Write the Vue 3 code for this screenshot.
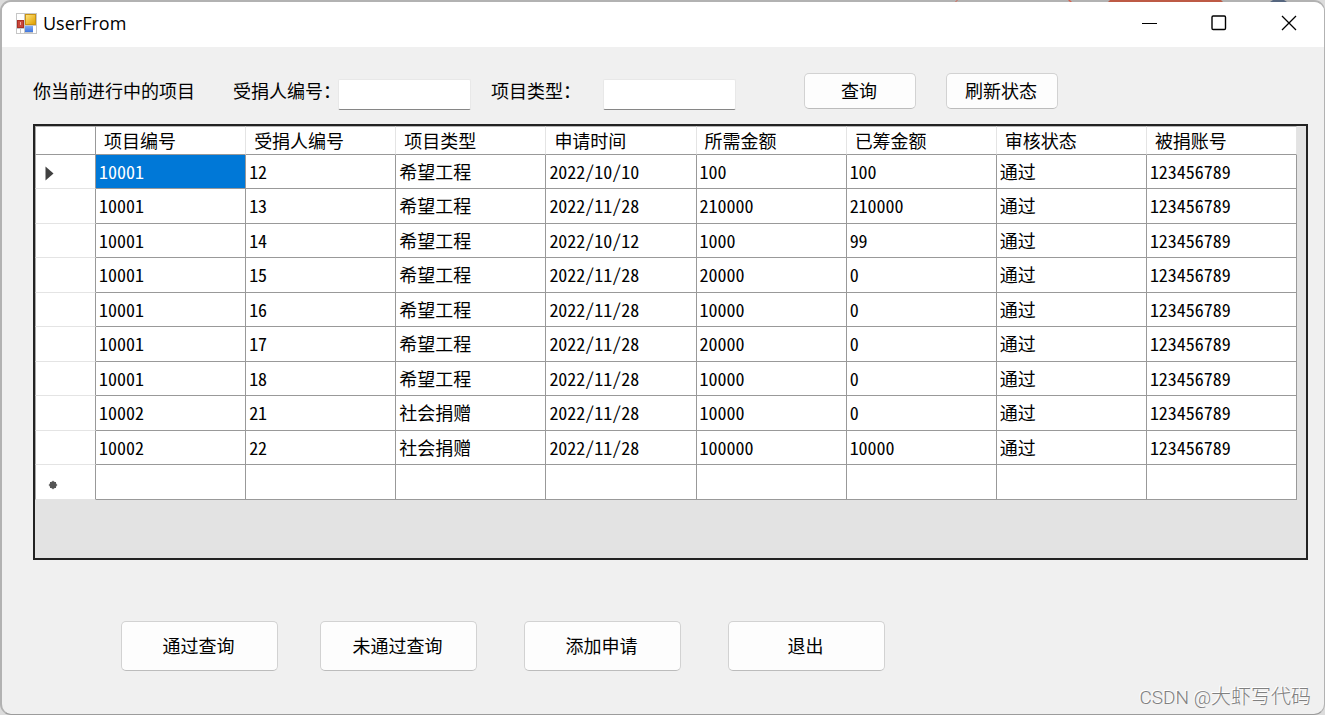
<script setup>
import { ref } from 'vue'

const recipientId = ref('')
const projectType = ref('')

const columns = ['项目编号', '受捐人编号', '项目类型', '申请时间', '所需金额', '已筹金额', '审核状态', '被捐账号']

const rows = [
  ['10001', '12', '希望工程', '2022/10/10', '100', '100', '通过', '123456789'],
  ['10001', '13', '希望工程', '2022/11/28', '210000', '210000', '通过', '123456789'],
  ['10001', '14', '希望工程', '2022/10/12', '1000', '99', '通过', '123456789'],
  ['10001', '15', '希望工程', '2022/11/28', '20000', '0', '通过', '123456789'],
  ['10001', '16', '希望工程', '2022/11/28', '10000', '0', '通过', '123456789'],
  ['10001', '17', '希望工程', '2022/11/28', '20000', '0', '通过', '123456789'],
  ['10001', '18', '希望工程', '2022/11/28', '10000', '0', '通过', '123456789'],
  ['10002', '21', '社会捐赠', '2022/11/28', '10000', '0', '通过', '123456789'],
  ['10002', '22', '社会捐赠', '2022/11/28', '100000', '10000', '通过', '123456789'],
]
</script>

<template>
  <div class="window">
    <header class="titlebar">
      <svg class="app-icon" viewBox="0 0 21 21" aria-hidden="true">
        <defs>
          <linearGradient id="gold" x1="0" y1="0" x2="1" y2="1">
            <stop offset="0" stop-color="#ffe27a" />
            <stop offset="1" stop-color="#e0a100" />
          </linearGradient>
          <linearGradient id="blue" x1="0" y1="0" x2="0" y2="1">
            <stop offset="0" stop-color="#82adf5" />
            <stop offset="1" stop-color="#3f74dc" />
          </linearGradient>
        </defs>
        <rect x="0" y="0" width="21" height="21" fill="#c6c6c6" />
        <rect x="1" y="1" width="7" height="6" fill="#fff" />
        <rect x="1" y="16" width="3" height="4" fill="#fff" />
        <rect x="5" y="16" width="3" height="4" fill="#fff" />
        <rect x="17" y="13" width="3" height="7" fill="#fff" />
        <rect x="9" y="1" width="11" height="11" fill="#c99314" />
        <rect x="10" y="2" width="9" height="9" fill="url(#gold)" />
        <rect x="1" y="7" width="7" height="8" fill="#a92f25" />
        <rect x="2" y="8" width="5" height="6" fill="#c8463a" />
        <rect x="4" y="9" width="1" height="3" fill="#f0b0a8" />
        <rect x="9" y="13" width="8" height="6" fill="url(#blue)" />
      </svg>
      <h1>UserFrom</h1>
      <div class="controls">
        <button type="button" aria-label="最小化">
          <svg viewBox="0 0 16 16"><path d="M1 8.5H16" /></svg>
        </button>
        <button type="button" aria-label="最大化">
          <svg viewBox="0 0 16 16"><rect class="thick" x="1" y="1" width="13.5" height="13.5" rx="1.2" /></svg>
        </button>
        <button type="button" aria-label="关闭">
          <svg viewBox="0 0 16 16"><path class="cross" d="M1 1L15 15M15 1L1 15" /></svg>
        </button>
      </div>
    </header>

    <main>
      <form class="toolbar" @submit.prevent>
        <span class="caption">你当前进行中的项目</span>
        <label class="recipient" for="recipient">受捐人编号：</label>
        <input id="recipient" v-model="recipientId" type="text" />
        <label class="type" for="type">项目类型：</label>
        <input id="type" v-model="projectType" type="text" />
        <button class="btn query" type="submit">查询</button>
        <button class="btn refresh" type="button">刷新状态</button>
      </form>

      <div class="grid">
        <table>
          <colgroup>
            <col class="marker-col" />
            <col v-for="c in columns" :key="c" />
          </colgroup>
          <thead>
            <tr>
              <td class="corner"></td>
              <th v-for="c in columns" :key="c" scope="col">{{ c }}</th>
            </tr>
          </thead>
          <tbody>
            <tr v-for="(row, r) in rows" :key="r">
              <td class="marker">
                <svg v-if="r === 0" viewBox="0 0 9 15" class="arrow"><path d="M0.500 0.500L8.500 7.500L0.500 14.500Z" /></svg>
              </td>
              <td v-for="(cell, c) in row" :key="c" :class="{ selected: r === 0 && c === 0 }">{{ cell }}</td>
            </tr>
            <tr>
              <td class="marker">
                <svg viewBox="0 0 10 10" class="star">
                  <circle cx="5" cy="5" r="3.2" />
                  <path d="M5 0.800V9.200M0.800 5H9.200M2 2L8 8M8 2L2 8" />
                </svg>
              </td>
              <td v-for="c in columns" :key="c"></td>
            </tr>
          </tbody>
        </table>
      </div>

      <div class="actions">
        <button class="btn" type="button">通过查询</button>
        <button class="btn" type="button">未通过查询</button>
        <button class="btn" type="button">添加申请</button>
        <button class="btn" type="button">退出</button>
      </div>
    </main>

    <div class="watermark"><span>CSDN @</span>大虾写代码</div>
  </div>
  <svg class="backdrop" viewBox="0 0 425 2" aria-hidden="true">
    <path d="M55 2L57 0H58L56 2ZM168 0H170L172 2H170Z" fill="#d8604c" />
    <path d="M210 0H321L323 2H208Z" fill="#bd5a45" />
    <path d="M373 0H384L387 2H370Z" fill="#56667f" />
  </svg>
</template>

<style>
body {
  margin: 0;
  background: #dcdcdc;
}
</style>

<style scoped>
.window {
  position: relative;
  box-sizing: border-box;
  min-height: 100vh;
  display: flex;
  flex-direction: column;
  border: 2px solid #b2b2b2;
  border-right-width: 1px;
  border-bottom: 1px solid #9c9c9c;
  border-radius: 11px;
  overflow: hidden;
  background: #f0f0f0;
  color: #000;
  font-family: "Noto Sans CJK SC", sans-serif;
  font-size: 18px;
  line-height: 24px;
  font-feature-settings: "hwid";
}

.backdrop {
  position: absolute;
  top: 0;
  right: 0;
  width: 425px;
  height: 2px;
}

.titlebar {
  box-sizing: border-box;
  display: flex;
  align-items: center;
  height: 45px;
  padding-left: 14px;
  padding-bottom: 3px;
  background: #fff;
}

.app-icon {
  width: 21px;
  height: 21px;
}

h1 {
  margin: 0 0 0 6px;
  font: 400 18px/24px "Open Sans", "Noto Sans", sans-serif;
  font-feature-settings: normal;
}

.controls {
  display: flex;
  margin-left: auto;
}

.controls button {
  width: 70px;
  height: 42px;
  padding: 0;
  border: 0;
  background: none;
  display: grid;
  place-items: center;
}

.controls svg {
  width: 16px;
  height: 16px;
  fill: none;
  stroke: #000;
  stroke-width: 1;
}

.controls .thick {
  stroke-width: 1.4;
}

.controls .cross {
  stroke-width: 1.3;
}

main {
  padding: 26px 16px 43px 31px;
}

.toolbar {
  display: flex;
  align-items: center;
  height: 36px;
  margin-bottom: 15px;
  white-space: nowrap;
}

.caption,
.toolbar label {
  padding-bottom: 2px;
}

.recipient {
  width: 105px;
  margin-left: 38px;
}

.type {
  width: 90px;
  margin-left: 20px;
  margin-right: 22px;
}

input {
  box-sizing: border-box;
  width: 133px;
  height: 31px;
  margin-top: 7px;
  padding: 2px 4px;
  border: 1px solid #e8e8e8;
  border-bottom: 1px solid #868686;
  border-radius: 2px;
  background: #fff;
  font: inherit;
  outline: none;
}

.btn {
  box-sizing: border-box;
  padding: 0 2px 2px 0;
  border: 1px solid #d2d2d2;
  border-bottom-color: #bcbcbc;
  border-radius: 5px;
  background: #fdfdfd;
  color: #000;
  font: inherit;
  font-feature-settings: inherit;
}

.toolbar .btn {
  width: 112px;
  height: 36px;
}

.query {
  margin-left: 68px;
}

.refresh {
  margin-left: 30px;
}

.grid {
  padding-bottom: 58px;
  border: 2px solid #222;
  background: #e3e3e3;
}

table {
  width: calc(100% - 9px);
  table-layout: fixed;
  border-collapse: separate;
  border-spacing: 0;
}

.marker-col {
  width: 61px;
}

th,
td {
  box-sizing: border-box;
  height: 35px;
  padding: 0 0 2px 3px;
  border-right: 1px solid #999;
  border-bottom: 1px solid #999;
  background: #fff;
  text-align: left;
  font-weight: 400;
  line-height: 24px;
  white-space: nowrap;
}

tbody tr:nth-child(odd) td {
  height: 34px;
}

thead th,
thead .corner {
  height: 29px;
  border-top: 1px solid #b5b5b5;
}

thead th {
  padding-left: 8px;
  border-right-color: #e4e4e4;
}

.corner,
.marker {
  border-left: 1px solid #a8a8a8;
}

td.marker {
  padding-left: 9px;
  border-bottom-color: #e4e4e4;
}

td.selected {
  background: #0078d7;
  color: #fff;
}

.marker svg {
  display: block;
}

.arrow {
  width: 9px;
  height: 15px;
  margin-top: 5px;
  fill: #404040;
}

.star {
  width: 10px;
  height: 10px;
  margin-left: 3px;
  margin-top: 8px;
  fill: #555;
  stroke: #555;
  stroke-width: 1;
}

.actions {
  display: flex;
  gap: 47px;
  margin-top: 61px;
  padding-left: 88px;
}

.actions .btn {
  width: 157px;
  height: 50px;
}

.actions .btn:first-child {
  margin-right: -5px;
}

.watermark {
  position: absolute;
  right: 13px;
  bottom: 2px;
  color: #808080;
  font-size: 20px;
  font-weight: 300;
  line-height: 28px;
  text-shadow: -1px -1px 0 #fff;
}

.watermark span {
  font-family: Roboto, sans-serif;
  font-size: 19px;
  font-feature-settings: normal;
}
</style>
